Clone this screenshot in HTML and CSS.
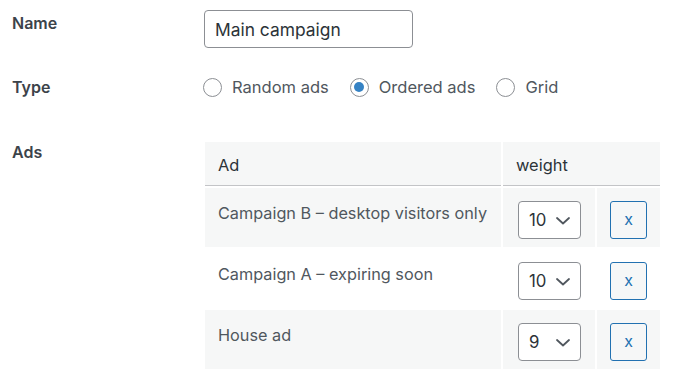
FILE: index.html
```html
<!DOCTYPE html>
<html lang="en">
<head>
<meta charset="utf-8">
<title>Campaign</title>
<link rel="stylesheet" href="styles.css">
</head>
<body>
<form class="form">
  <div class="row row-name">
    <div class="label">Name</div>
    <div class="field">
      <input class="text-input" type="text" value="Main campaign">
    </div>
  </div>
  <div class="row row-type">
    <div class="label">Type</div>
    <div class="field radios">
      <label class="radio-item"><input type="radio" name="type" class="radio"><span>Random ads</span></label>
      <label class="radio-item"><input type="radio" name="type" class="radio" checked><span>Ordered ads</span></label>
      <label class="radio-item"><input type="radio" name="type" class="radio"><span>Grid</span></label>
    </div>
  </div>
  <div class="row row-ads">
    <div class="label">Ads</div>
    <div class="field">
      <table class="ads-table">
        <colgroup>
          <col class="col-ad">
          <col class="col-weight">
          <col class="col-remove">
        </colgroup>
        <thead>
          <tr>
            <th>Ad</th>
            <th colspan="2">weight</th>
          </tr>
        </thead>
        <tbody>
          <tr class="odd">
            <td class="ad-name">Campaign B – desktop visitors only</td>
            <td class="weight-cell">
              <div class="select-wrap">
                <select class="weight-select"><option>10</option></select>
                <svg class="chevron" width="14" height="8" viewBox="0 0 14 8"><path d="M1 1 L7 6.5 L13 1" fill="none" stroke="#50575e" stroke-width="1.8" stroke-linecap="round" stroke-linejoin="round"/></svg>
              </div>
            </td>
            <td class="remove-cell"><button type="button" class="remove-btn">x</button></td>
          </tr>
          <tr class="even">
            <td class="ad-name">Campaign A – expiring soon</td>
            <td class="weight-cell">
              <div class="select-wrap">
                <select class="weight-select"><option>10</option></select>
                <svg class="chevron" width="14" height="8" viewBox="0 0 14 8"><path d="M1 1 L7 6.5 L13 1" fill="none" stroke="#50575e" stroke-width="1.8" stroke-linecap="round" stroke-linejoin="round"/></svg>
              </div>
            </td>
            <td class="remove-cell"><button type="button" class="remove-btn">x</button></td>
          </tr>
          <tr class="odd">
            <td class="ad-name">House ad</td>
            <td class="weight-cell">
              <div class="select-wrap">
                <select class="weight-select"><option>9</option></select>
                <svg class="chevron" width="14" height="8" viewBox="0 0 14 8"><path d="M1 1 L7 6.5 L13 1" fill="none" stroke="#50575e" stroke-width="1.8" stroke-linecap="round" stroke-linejoin="round"/></svg>
              </div>
            </td>
            <td class="remove-cell"><button type="button" class="remove-btn">x</button></td>
          </tr>
        </tbody>
      </table>
    </div>
  </div>
</form>
</body>
</html>
```
FILE: styles.css
```css
* { box-sizing: border-box; }
html, body {
  margin: 0;
  padding: 0;
  background: #ffffff;
}
body {
  font-family: Inter, "Noto Sans", "Liberation Sans", sans-serif;
  font-size: 16px;
  color: #2c3338;
}
.form {
  padding: 10px 0 0 12px;
}
.row {
  display: flex;
  align-items: flex-start;
}
.label {
  width: 191px;
  flex: none;
  font-size: 16px;
  font-weight: 600;
  line-height: 24px;
  color: #3c434a;
}
.field {
  flex: none;
}
.row-name .label { padding-top: 1px; }
.row-name .field { padding-left: 1px; }
.row-type { margin-top: 27px; }
.row-ads { margin-top: 41px; }

.text-input {
  display: block;
  width: 209px;
  height: 38px;
  margin: 0;
  padding: 0 10px;
  border: 1px solid #8c8f94;
  border-radius: 4px;
  font-family: inherit;
  font-size: 17.4px;
  color: #2c3338;
  background: #fff;
  outline: none;
}

.radios {
  display: flex;
  align-items: center;
  gap: 21px;
  height: 24px;
}
.radio-item {
  display: flex;
  align-items: center;
  font-size: 16.5px;
  line-height: 24px;
  color: #50575e;
}
.radio {
  appearance: none;
  -webkit-appearance: none;
  width: 19px;
  height: 19px;
  margin: 0 10px 0 0;
  border: 1px solid #8c8f94;
  border-radius: 50%;
  background: #fff;
  display: grid;
  place-items: center;
}
.radio:checked::before {
  content: "";
  width: 10px;
  height: 10px;
  border-radius: 50%;
  background: #3582c4;
}

.ads-table {
  border-collapse: separate;
  border-spacing: 2px;
  table-layout: fixed;
  width: 459px;
}
.col-ad { width: 296px; }
.col-weight { width: 92px; }
.col-remove { width: 63px; }
.ads-table th {
  background: #f6f7f7;
  text-align: left;
  font-weight: 400;
  font-size: 16.4px;
  line-height: 24px;
  color: #2c3338;
  padding: 11px 13px 8px;
  border-bottom: 1px solid #c3c4c7;
}
.ads-table td {
  vertical-align: top;
  padding: 13px 14px 8px 13px;
  font-size: 16.25px;
  line-height: 24px;
  color: #50575e;
}
.ads-table tr.odd td { background: #f6f7f7; }
.ads-table tr.even td { background: #ffffff; }
.ads-table td.ad-name { white-space: nowrap; }
.ads-table td.weight-cell { padding-left: 15px; padding-right: 14px; }
.ads-table td.remove-cell { padding-left: 13px; padding-right: 13px; }

.select-wrap {
  position: relative;
  width: 63px;
  height: 38px;
}
.weight-select {
  appearance: none;
  -webkit-appearance: none;
  display: block;
  width: 63px;
  height: 38px;
  margin: 0;
  padding: 0 0 0 10px;
  border: 1px solid #8c8f94;
  border-radius: 4px;
  background: #fff;
  font-family: inherit;
  font-size: 16.8px;
  color: #2c3338;
}
.chevron {
  position: absolute;
  right: 11px;
  top: 16px;
  pointer-events: none;
}
.remove-btn {
  display: block;
  width: 37px;
  height: 38px;
  margin: 0;
  padding: 0 0 2px;
  border: 1px solid #2271b1;
  border-radius: 3px;
  background: #f6f7f7;
  color: #2271b1;
  font-family: inherit;
  font-size: 16px;
  line-height: 1;
}
```
